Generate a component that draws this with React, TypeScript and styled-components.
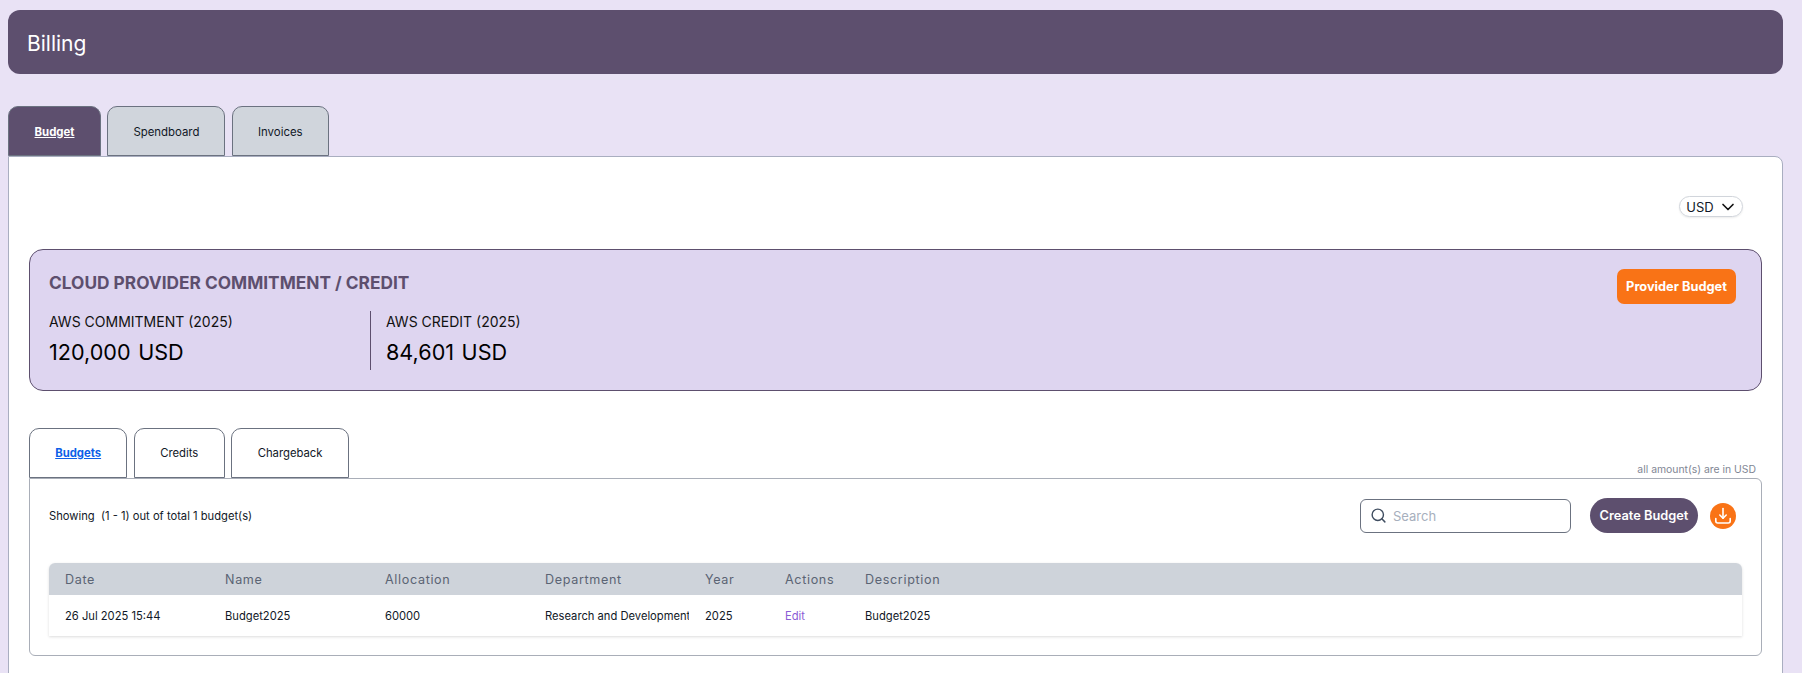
import React from "react";
import styled, { createGlobalStyle } from "styled-components";
import { ChevronDown, Search } from "lucide-react";

const Global = createGlobalStyle`
  html, body { margin: 0; padding: 0; overflow: hidden; height: 100%; }
  body { background: #e9e2f5; font-family: Inter, "Liberation Sans", sans-serif; color: #000; }
  * { box-sizing: border-box; }
`;

const Page = styled.div`
  padding: 10px 19px 0 8px;
`;

const Header = styled.header`
  height: 64px;
  background: #5d4f6e;
  border-radius: 12px;
  display: flex;
  align-items: center;
  padding: 2px 0 0 19px;
  margin-bottom: 32px;
  color: #fff;
  font-size: 21px;
  font-weight: 400;
`;

const TabRow = styled.div`
  display: flex;
  gap: 6.4px;
  height: 50px;
`;

const MainTab = styled.div<{ $w: number; $active?: boolean }>`
  width: ${(p) => p.$w}px;
  height: 50px;
  display: flex;
  align-items: center;
  justify-content: center;
  padding-top: 1px;
  border: 1px solid #6b7280;
  border-radius: 10px 10px 0 0;
  font-size: 11.4px;
  font-weight: ${(p) => (p.$active ? 700 : 400)};
  color: ${(p) => (p.$active ? "#fff" : "#111827")};
  background: ${(p) => (p.$active ? "#5d4f6e" : "#d0d5dc")};
  text-decoration: ${(p) => (p.$active ? "underline" : "none")};
`;

const MainPanel = styled.main`
  background: #fff;
  border: 1px solid #a9aec0;
  border-radius: 0 8px 8px 8px;
  padding: 39px 20px 40px 20px;
`;

const CurrencyRow = styled.div`
  display: flex;
  justify-content: flex-end;
  padding-right: 19px;
  margin-bottom: 32px;
`;

const CurrencyPill = styled.div`
  width: 64px;
  height: 21px;
  display: flex;
  align-items: center;
  justify-content: center;
  gap: 4px;
  padding-left: 2px;
  border: 1px solid #d1d5db;
  border-radius: 11px;
  box-shadow: 0 1px 2px rgba(0, 0, 0, 0.08);
  font-size: 13px;
  color: #111827;
`;

const CommitCard = styled.section`
  height: 142px;
  background: #ded5f0;
  border: 1px solid #5d4f6e;
  border-radius: 14px;
  padding: 19px 19px 0 19px;
  display: flex;
  justify-content: space-between;
  align-items: flex-start;
  margin-bottom: 37px;
`;

const CardLeft = styled.div`
  display: flex;
  flex-direction: column;
  padding-top: 3px;
`;

const CardTitle = styled.h2`
  margin: 0 0 17px 0;
  font-size: 17.3px;
  line-height: 22px;
  font-weight: 700;
  color: #5d4f6e;
`;

const Metrics = styled.div`
  display: flex;
`;

const Metric = styled.div<{ $divider?: boolean }>`
  width: ${(p) => (p.$divider ? "322px" : "auto")};
  height: 59px;
  padding-top: 1px;
  ${(p) => (p.$divider ? "border-right: 1px solid #5d4f6e;" : "padding-left: 15px;")}
`;

const MetricLabel = styled.div`
  font-size: 14px;
  line-height: 20px;
  margin-bottom: 6px;
  color: #111;
`;

const MetricValue = styled.div`
  font-size: 21.6px;
  line-height: 28px;
  color: #000;
  word-spacing: 1.5px;
`;

const ProviderButton = styled.button`
  margin: 0 6px 0 0;
  width: 119px;
  height: 35px;
  border: none;
  border-radius: 7px;
  background: #f97316;
  color: #fff;
  font-family: inherit;
  font-size: 12.8px;
  font-weight: 700;
`;

const SubTab = styled.div<{ $w: number; $active?: boolean }>`
  width: ${(p) => p.$w}px;
  height: 50px;
  display: flex;
  align-items: center;
  justify-content: center;
  border: 1px solid #6b7280;
  border-radius: 10px 10px 0 0;
  font-size: 11.3px;
  font-weight: ${(p) => (p.$active ? 700 : 400)};
  color: ${(p) => (p.$active ? "#0d5fe8" : "#111827")};
  text-decoration: ${(p) => (p.$active ? "underline" : "none")};
`;

const SubHead = styled.div`
  display: flex;
  justify-content: space-between;
  align-items: flex-end;
  padding-right: 6px;
`;

const AmountNote = styled.div`
  font-size: 10.4px;
  line-height: 14px;
  color: #7f8694;
  margin-bottom: 1px;
`;

const SubPanel = styled.div`
  height: 178px;
  border: 1px solid #a9aeb8;
  border-radius: 0 6px 6px 6px;
  padding: 19px 19px 0 19px;
`;

const Toolbar = styled.div`
  display: flex;
  align-items: center;
  height: 35px;
  margin-bottom: 30px;
  padding-right: 6px;
`;

const Showing = styled.div`
  font-size: 11.2px;
  color: #111827;
  white-space: pre;
  flex: 1;
`;

const SearchBox = styled.div`
  width: 211px;
  height: 34px;
  border: 1px solid #6b7280;
  border-radius: 6px;
  display: flex;
  align-items: center;
  padding-left: 9px;
  gap: 6px;
  color: #3f4d60;
  margin-right: 19px;
`;

const SearchHint = styled.span`
  font-size: 13px;
  color: #a7afbd;
`;

const CreateButton = styled.button`
  width: 108px;
  height: 35px;
  border: none;
  border-radius: 18px;
  background: #5d4f6e;
  color: #fff;
  font-family: inherit;
  font-size: 12.8px;
  font-weight: 600;
  margin-right: 12px;
`;

const DownloadCircle = styled.div`
  width: 26px;
  height: 26px;
  border-radius: 50%;
  background: #f97316;
  display: flex;
  align-items: center;
  justify-content: center;
`;

const Table = styled.div`
  box-shadow: 0 1px 3px rgba(0, 0, 0, 0.14);
  border-radius: 6px 6px 0 0;
`;

const Cols = `
  display: grid;
  grid-template-columns: 160px 160px 160px 160px 80px 80px 1fr;
`;

const HeadRow = styled.div`
  ${Cols}
  height: 32px;
  align-items: center;
  background: #ced3da;
  border-radius: 6px 6px 0 0;
`;

const HeadCell = styled.div`
  padding-left: 16px;
  font-size: 12.6px;
  letter-spacing: 0.65px;
  color: #5b6474;
`;

const BodyRow = styled.div`
  ${Cols}
  height: 41px;
  align-items: center;
  background: #fff;
`;

const Cell = styled.div<{ $link?: boolean }>`
  padding-left: 16px;
  font-size: 11.2px;
  white-space: nowrap;
  overflow: hidden;
  color: ${(p) => (p.$link ? "#8b5cd6" : "#111827")};
`;

const heads = ["Date", "Name", "Allocation", "Department", "Year", "Actions", "Description"];

export default function App() {
  return (
    <Page>
      <Global />
      <Header>Billing</Header>
      <TabRow>
        <MainTab $w={93} $active>Budget</MainTab>
        <MainTab $w={118}>Spendboard</MainTab>
        <MainTab $w={97}>Invoices</MainTab>
      </TabRow>
      <MainPanel>
        <CurrencyRow>
          <CurrencyPill>
            USD
            <ChevronDown size={20} color="#111" strokeWidth={2} />
          </CurrencyPill>
        </CurrencyRow>
        <CommitCard>
          <CardLeft>
            <CardTitle>CLOUD PROVIDER COMMITMENT / CREDIT</CardTitle>
            <Metrics>
              <Metric $divider>
                <MetricLabel>AWS COMMITMENT (2025)</MetricLabel>
                <MetricValue>120,000 USD</MetricValue>
              </Metric>
              <Metric>
                <MetricLabel>AWS CREDIT (2025)</MetricLabel>
                <MetricValue>84,601 USD</MetricValue>
              </Metric>
            </Metrics>
          </CardLeft>
          <ProviderButton>Provider Budget</ProviderButton>
        </CommitCard>
        <SubHead>
          <TabRow>
            <SubTab $w={98.3} $active>Budgets</SubTab>
            <SubTab $w={91}>Credits</SubTab>
            <SubTab $w={118}>Chargeback</SubTab>
          </TabRow>
          <AmountNote>all amount(s) are in USD</AmountNote>
        </SubHead>
        <SubPanel>
          <Toolbar>
            <Showing>Showing  (1 - 1) out of total 1 budget(s)</Showing>
            <SearchBox>
              <Search size={17} strokeWidth={2} />
              <SearchHint>Search</SearchHint>
            </SearchBox>
            <CreateButton>Create Budget</CreateButton>
            <DownloadCircle>
              <svg width="20" height="20" viewBox="0 0 20 20" fill="none" stroke="#fff" strokeWidth="1.6" strokeLinecap="round" strokeLinejoin="round">
                <path d="M10 2.5v9.7" />
                <path d="M6.8 9 10 12.2 13.2 9" />
                <path d="M2.8 12.5v2.5a2 2 0 0 0 2 2h10.4a2 2 0 0 0 2-2v-2.5" />
              </svg>
            </DownloadCircle>
          </Toolbar>
          <Table>
            <HeadRow>
              {heads.map((h) => (
                <HeadCell key={h}>{h}</HeadCell>
              ))}
            </HeadRow>
            <BodyRow>
              <Cell>26 Jul 2025 15:44</Cell>
              <Cell>Budget2025</Cell>
              <Cell>60000</Cell>
              <Cell>Research and Development</Cell>
              <Cell>2025</Cell>
              <Cell $link>Edit</Cell>
              <Cell>Budget2025</Cell>
            </BodyRow>
          </Table>
        </SubPanel>
      </MainPanel>
    </Page>
  );
}
